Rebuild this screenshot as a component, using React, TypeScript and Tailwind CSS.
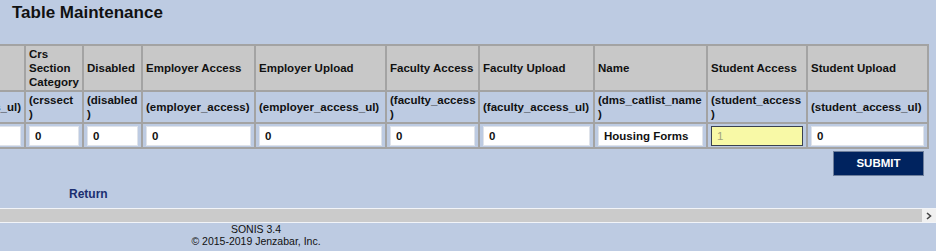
import React from "react";

type Col = {
    label: string[];
    field: string[];
    value: string;
    width: number;
    highlight?: boolean;
};

const cols: Col[] = [
    { label: ["Student Access Upload"], field: ["(staff_access_ul)"], value: "0", width: 120 },
    { label: ["Crs", "Section", "Category"], field: ["(crssect", ")"], value: "0", width: 58 },
    { label: ["Disabled"], field: ["(disabled", ")"], value: "0", width: 59 },
    { label: ["Employer Access"], field: ["(employer_access)"], value: "0", width: 113 },
    { label: ["Employer Upload"], field: ["(employer_access_ul)"], value: "0", width: 131 },
    { label: ["Faculty Access"], field: ["(faculty_access", ")"], value: "0", width: 93 },
    { label: ["Faculty Upload"], field: ["(faculty_access_ul)"], value: "0", width: 115 },
    { label: ["Name"], field: ["(dms_catlist_name", ")"], value: "Housing Forms", width: 113 },
    { label: ["Student Access"], field: ["(student_access", ")"], value: "1", width: 100, highlight: true },
    { label: ["Student Upload"], field: ["(student_access_ul)"], value: "0", width: 121 },
];

const font = { fontFamily: '"Liberation Sans", Arial, sans-serif' };

function Lines({ lines }: { lines: string[] }) {
    return (
        <>
            {lines.map((l, i) => (
                <React.Fragment key={i}>
                    {i > 0 && <br />}
                    {l}
                </React.Fragment>
            ))}
        </>
    );
}

export default function App() {
    const tableWidth = cols.reduce((s, c) => s + c.width, 0);

    return (
        <div className="w-[936px] h-[251px] bg-[#bdcbe2] text-black overflow-hidden" style={font}>
            {/* scrolled content area */}
            <div className="overflow-hidden">
                <h1 className="pl-[12px] pt-[3px] text-[17px] leading-[20px] font-bold text-[#111]">
                    Table Maintenance
                </h1>

                <div className="mt-[21px] ml-[-96px]">
                    <table
                        className="table-fixed border-collapse border-2 border-[#a3a3a3]"
                        style={{ width: tableWidth }}
                    >
                        <colgroup>
                            {cols.map((c, i) => (
                                <col key={i} style={{ width: c.width }} />
                            ))}
                        </colgroup>
                        <tbody>
                            <tr className="h-[46px] bg-[#c8c8c8]">
                                {cols.map((c, i) => (
                                    <td
                                        key={i}
                                        className="border-2 border-[#a3a3a3] px-[3px] align-middle text-[11.5px] leading-[14px] font-bold text-[#111] whitespace-nowrap"
                                    >
                                        {i === 0 ? "" : <Lines lines={c.label} />}
                                    </td>
                                ))}
                            </tr>
                            <tr className="h-[32px]">
                                {cols.map((c, i) => (
                                    <td
                                        key={i}
                                        className={
                                            "border-2 border-[#a3a3a3] px-[3px] align-middle text-[11.5px] leading-[14px] font-bold text-[#111] whitespace-nowrap " +
                                            (i === 0 ? "text-right" : "")
                                        }
                                    >
                                        <Lines lines={c.field} />
                                    </td>
                                ))}
                            </tr>
                            <tr className="h-[25px]">
                                {cols.map((c, i) => (
                                    <td key={i} className="border-2 border-[#a3a3a3] px-[3px] py-0 align-middle">
                                        <input
                                            readOnly
                                            value={c.value}
                                            className={
                                                c.highlight
                                                    ? "block w-full h-[20px] pl-[5px] bg-[#f8f9a6] border border-[#3a4150] text-[11.5px] text-[#a3a37c] outline-none"
                                                    : "block w-full h-[20px] pl-[5px] bg-white border border-[#dfe3ea] text-[11.5px] font-bold text-[#111] outline-none"
                                            }
                                            style={font}
                                        />
                                    </td>
                                ))}
                            </tr>
                        </tbody>
                    </table>
                </div>

                <div className="flex justify-end pr-[12px] mt-[2px]">
                    <button className="w-[91px] h-[25px] bg-[#00235f] border border-[#6e7f9c] text-white text-[11.5px] font-bold">
                        SUBMIT
                    </button>
                </div>

                <div className="pl-[69px] mt-[5px] h-[27px]">
                    <a className="text-[12px] leading-[14px] font-bold text-[#1b2f70] cursor-pointer">Return</a>
                </div>
            </div>

            {/* horizontal scrollbar */}
            <div className="flex h-[15px] border-y border-[#f2f4f8] bg-[#cbcbcb]">
                <div className="flex-1" />
                <div className="w-[14px] flex items-center justify-center bg-[#f0f0f0]">
                    <svg width="6" height="8" viewBox="0 0 6 8">
                        <path d="M1 1 L4.5 4 L1 7" fill="none" stroke="#444" strokeWidth="1.6" />
                    </svg>
                </div>
            </div>

            <div className="w-[512px] text-center text-[10.5px] leading-[12px] text-[#111]">
                <div>SONIS 3.4</div>
                <div>© 2015-2019 Jenzabar, Inc.</div>
            </div>
        </div>
    );
}
